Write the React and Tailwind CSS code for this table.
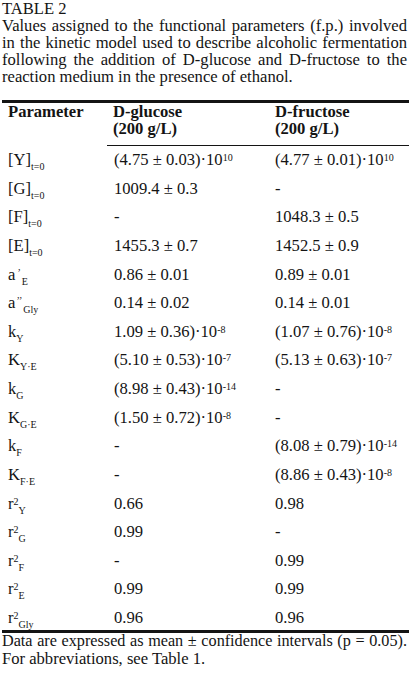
import React from "react";

const Sub = ({ children, className = "" }) => (
  <span className={"text-[10px] leading-none align-[-5px] " + className}>{children}</span>
);
const Sup = ({ children, className = "" }) => (
  <span className={"text-[10px] leading-none align-[4px] " + className}>{children}</span>
);

const Pow = ({ base, exp }) => (
  <>
    {base}·10<Sup>{exp}</Sup>
  </>
);

const rows = [
  [<>[Y]<Sub>t=0</Sub></>, <Pow base="(4.75 ± 0.03)" exp="10" />, <Pow base="(4.77 ± 0.01)" exp="10" />],
  [<>[G]<Sub>t=0</Sub></>, "1009.4 ± 0.3", "-"],
  [<>[F]<Sub>t=0</Sub></>, "-", "1048.3 ± 0.5"],
  [<>[E]<Sub>t=0</Sub></>, "1455.3 ± 0.7", "1452.5 ± 0.9"],
  [<>a<Sup className="ml-[2px]">’</Sup><Sub className="ml-[1px]">E</Sub></>, "0.86 ± 0.01", "0.89 ± 0.01"],
  [<>a<Sup className="ml-[1px]">’’</Sup><Sub className="ml-[1px]">Gly</Sub></>, "0.14 ± 0.02", "0.14 ± 0.01"],
  [<>k<Sub>Y</Sub></>, <Pow base="1.09 ± 0.36)" exp="-8" />, <Pow base="(1.07 ± 0.76)" exp="-8" />],
  [<>K<Sub>Y·E</Sub></>, <Pow base="(5.10 ± 0.53)" exp="-7" />, <Pow base="(5.13 ± 0.63)" exp="-7" />],
  [<>k<Sub>G</Sub></>, <Pow base="(8.98 ± 0.43)" exp="-14" />, "-"],
  [<>K<Sub>G·E</Sub></>, <Pow base="(1.50 ± 0.72)" exp="-8" />, "-"],
  [<>k<Sub>F</Sub></>, "-", <Pow base="(8.08 ± 0.79)" exp="-14" />],
  [<>K<Sub>F·E</Sub></>, "-", <Pow base="(8.86 ± 0.43)" exp="-8" />],
  [<>r<Sup>2</Sup><Sub>Y</Sub></>, "0.66", "0.98"],
  [<>r<Sup>2</Sup><Sub>G</Sub></>, "0.99", "-"],
  [<>r<Sup>2</Sup><Sub>F</Sub></>, "-", "0.99"],
  [<>r<Sup>2</Sup><Sub>E</Sub></>, "0.99", "0.99"],
  [<>r<Sup>2</Sup><Sub>Gly</Sub></>, "0.96", "0.96"],
];

export default function App() {
  return (
    <div
      className="w-[409px] h-[675px] bg-white text-[#141414] text-[16.6px] leading-[17px] overflow-hidden"
      style={{ fontFamily: '"Liberation Serif", "Times New Roman", serif' }}
    >
      <div className="pl-[2px] pr-[2px]">
        <div>TABLE 2</div>
        <div className="text-justify [text-align-last:justify] whitespace-nowrap">Values assigned to the functional parameters (f.p.) involved</div>
        <div className="text-justify [text-align-last:justify] whitespace-nowrap">in the kinetic model used to describe alcoholic fermentation</div>
        <div className="text-justify [text-align-last:justify] whitespace-nowrap">following the addition of D-glucose and D-fructose to the</div>
        <div className="whitespace-nowrap">reaction medium in the presence of ethanol.</div>
      </div>

      <div className="mt-[15px] ml-[2px] h-[3px] bg-[#141414]" />

      <div className="flex font-bold pb-[8px]">
        <div className="w-[113px] pl-[8px]">Parameter</div>
        <div className="w-[162px]">
          <div>D-glucose</div>
          <div>(200 g/L)</div>
        </div>
        <div>
          <div>D-fructose</div>
          <div>(200 g/L)</div>
        </div>
      </div>
      <div className="ml-[107px] h-px bg-[#141414]" />

      <div className="flex flex-col">
        {rows.map((r, i) => (
          <div
            key={i}
            className={
              "flex items-start pt-[5px] " +
              (i === rows.length - 1 ? "h-[26px]" : "h-[28.625px]")
            }
          >
            <div className="w-[114px] pl-[8px] whitespace-nowrap">{r[0]}</div>
            <div className="w-[161px] whitespace-nowrap">{r[1]}</div>
            <div className="whitespace-nowrap">{r[2]}</div>
          </div>
        ))}
      </div>

      <div className="ml-[2px] h-[3px] bg-[#141414]" />

      <div className="pl-[2px] pr-[2px]">
        <div className="text-justify [text-align-last:justify] whitespace-nowrap text-[16.2px]">Data are expressed as mean ± confidence intervals (p = 0.05).</div>
        <div className="whitespace-nowrap">For abbreviations, see Table 1.</div>
      </div>
    </div>
  );
}
